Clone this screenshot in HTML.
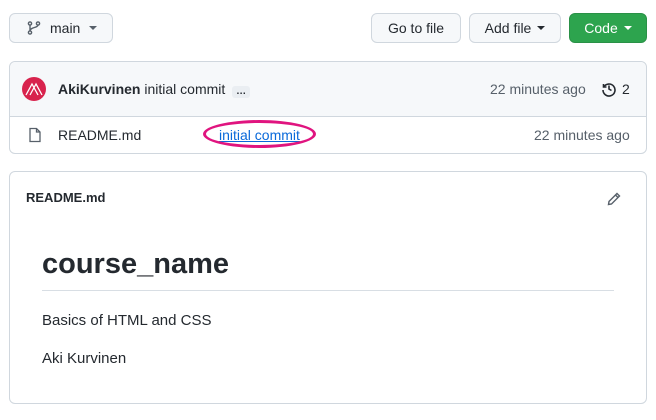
<!DOCTYPE html>
<html><head><style>
body{margin:0;width:656px;height:420px;background:#fff;font-family:"Liberation Sans",sans-serif;font-size:14px;color:#24292f;position:relative;overflow:hidden}
.btn{position:absolute;top:13px;height:30px;border:1px solid #d0d7de;border-radius:6px;background:#f6f8fa;box-sizing:border-box;display:flex;align-items:center;justify-content:center;font-size:14px}
.caret{display:inline-block;width:0;height:0;border-left:4px solid transparent;border-right:4px solid transparent;border-top:4px solid currentColor;margin-left:6px;vertical-align:middle}
.box{position:absolute;left:9px;width:638px;border:1px solid #d0d7de;border-radius:6px;box-sizing:border-box}
.abs{position:absolute;white-space:nowrap}
</style></head><body>
<div class="btn" style="left:9px;width:104px;justify-content:flex-start;padding-left:16px">
<svg width="16" height="16" viewBox="0 0 16 16" fill="none" stroke="#57606a" stroke-width="1.4"><circle cx="4" cy="3.5" r="1.6"/><circle cx="4" cy="12.5" r="1.6"/><circle cx="12" cy="3.5" r="1.6"/><path d="M4 5v6M12 5c0 3-8 2-8 6"/></svg>
<span style="margin-left:8px">main</span><span class="caret" style="margin-left:9px;color:#57606a"></span></div>
<div class="btn" style="left:371px;width:90px">Go to file</div>
<div class="btn" style="left:469px;width:92px">Add file<span class="caret"></span></div>
<div class="btn" style="left:569px;width:78px;background:#2da44e;border-color:#2a9147;color:#fff">Code<span class="caret"></span></div>

<div class="box" style="top:61px;height:93px">
<div style="height:54px;background:#f6f8fa;border-bottom:1px solid #d0d7de;border-radius:6px 6px 0 0"></div>
</div>
<svg class="abs" style="left:22px;top:77px" width="24" height="24" viewBox="0 0 24 24"><circle cx="12" cy="12" r="12" fill="#d8234d"/><path d="M4 18L10 7L16 18M8 18L14 7L20 18" stroke="#fff" stroke-width="1.3" fill="none"/></svg>
<div class="abs" style="left:58px;top:81px"><b>AkiKurvinen</b> initial commit <span style="display:inline-block;background:#eaeef2;border-radius:3px;padding:0 4px;font-size:10px;line-height:12px;margin-left:3px;font-weight:bold">…</span></div>
<div class="abs" style="left:490px;top:81px;color:#57606a">22 minutes ago</div>
<svg class="abs" style="left:601px;top:81px" width="16" height="16" viewBox="0 0 16 16" fill="none" stroke="#24292f" stroke-width="1.6"><path d="M2.5 3v3h3"/><path d="M2.8 6A6 6 0 1 1 2 9"/><path d="M8 4.5V8l2.5 1.5"/></svg>
<div class="abs" style="left:622px;top:81px">2</div>

<svg class="abs" style="left:27px;top:127px" width="16" height="16" viewBox="0 0 16 16" fill="none" stroke="#57606a" stroke-width="1.3"><path d="M3 1.5h6.5l3.5 3.5v9.5H3z"/><path d="M9.5 1.5V5H13"/></svg>
<div class="abs" style="left:58px;top:127px">README.md</div>
<div class="abs" style="left:219px;top:127px;color:#0969da;text-decoration:underline">initial commit</div>
<div class="abs" style="left:203px;top:120px;width:113px;height:28px;border:3px solid #e0147f;border-radius:50%;box-sizing:border-box"></div>
<div class="abs" style="left:534px;top:127px;color:#57606a">22 minutes ago</div>

<div class="box" style="top:171px;height:233px"></div>
<div class="abs" style="left:26px;top:190px;font-size:13px;font-weight:bold">README.md</div>
<svg class="abs" style="left:606px;top:191px" width="16" height="16" viewBox="0 0 16 16" fill="none" stroke="#57606a" stroke-width="1.4"><path d="M11 2.5l2.5 2.5L5.5 13 2.5 13.5 3 10.5z"/><path d="M9.5 4l2.5 2.5"/></svg>
<div class="abs" style="left:42px;top:246px;font-size:29px;font-weight:bold;line-height:36px">course_name</div>
<div class="abs" style="left:42px;top:290px;width:572px;border-top:1px solid #d8dee4"></div>
<div class="abs" style="left:42px;top:312px;font-size:15px">Basics of HTML and CSS</div>
<div class="abs" style="left:42px;top:350px;font-size:15px">Aki Kurvinen</div>
</body></html>
